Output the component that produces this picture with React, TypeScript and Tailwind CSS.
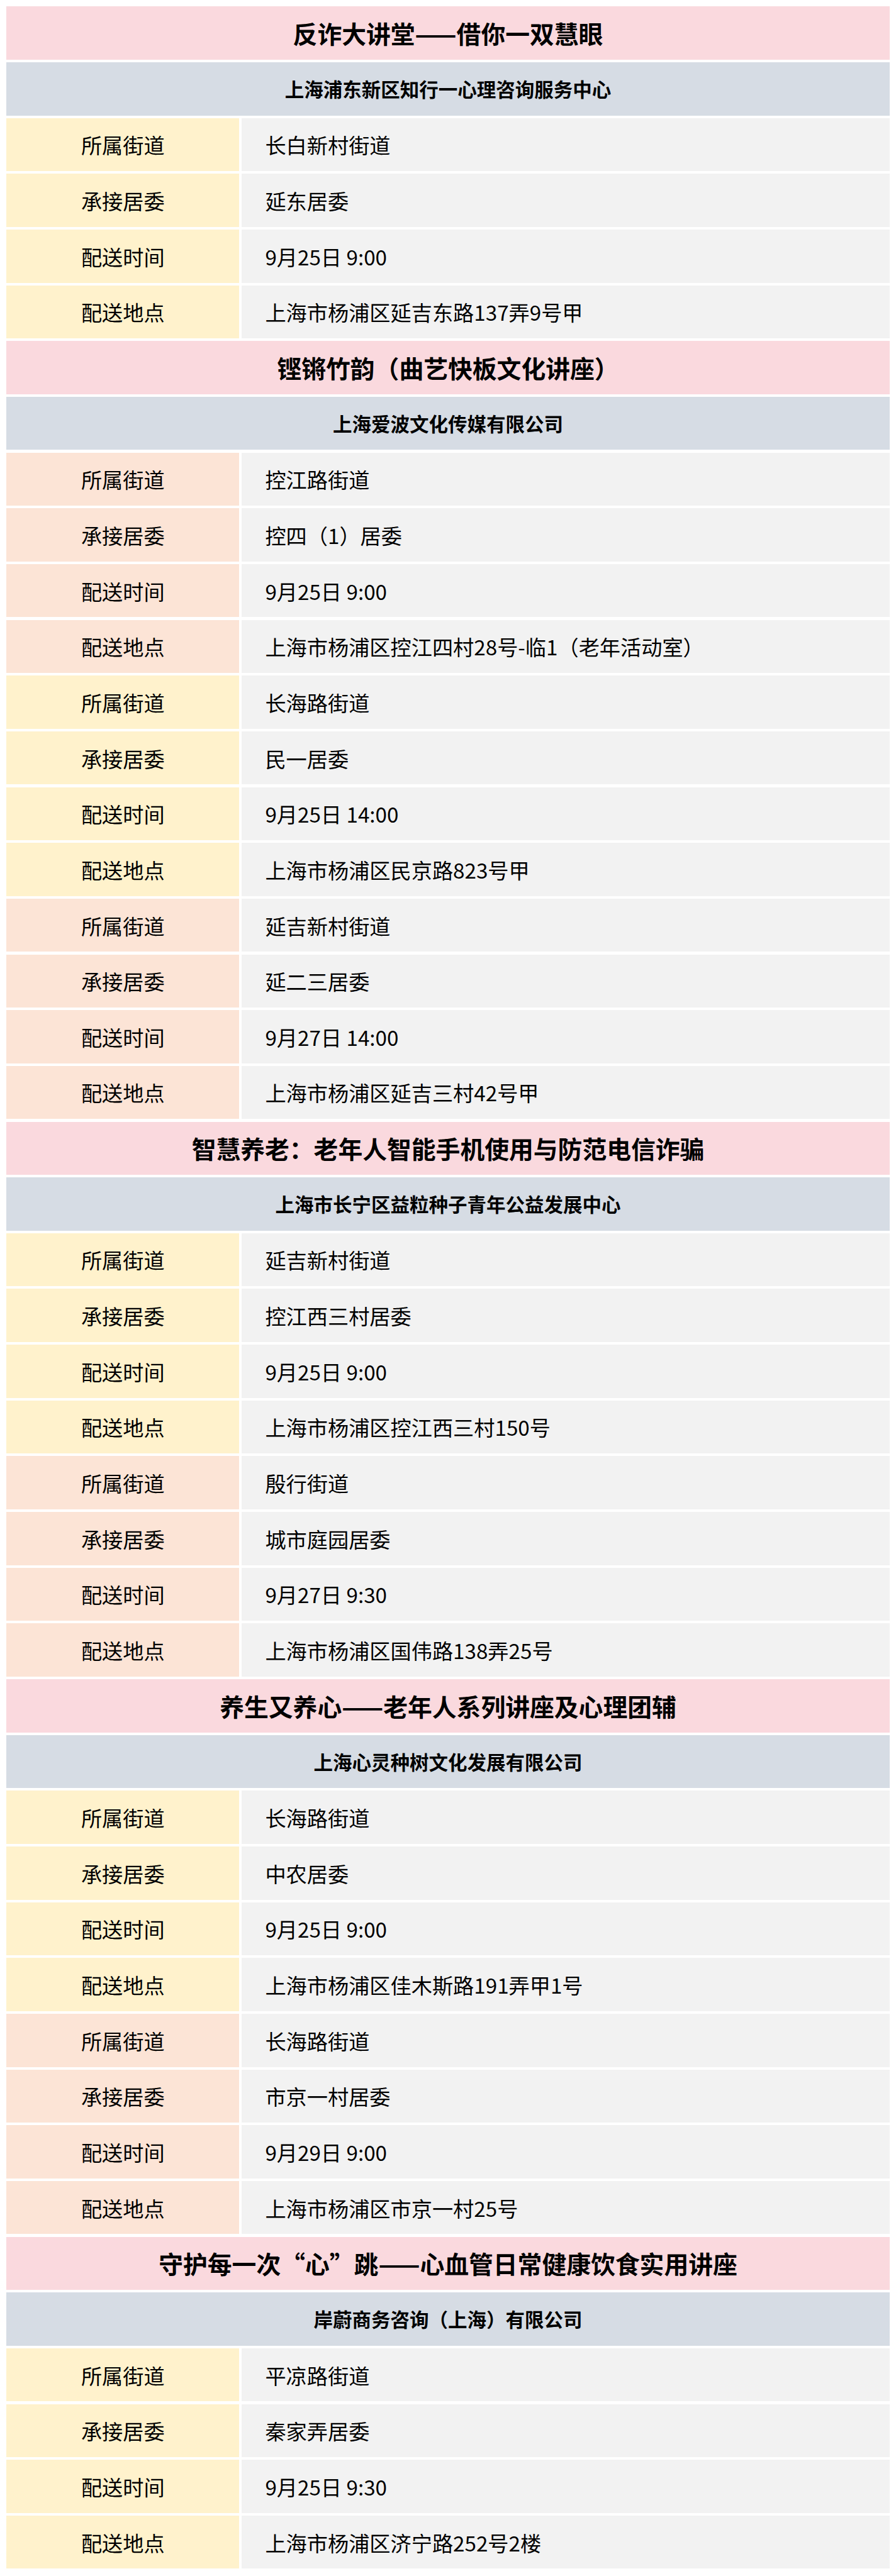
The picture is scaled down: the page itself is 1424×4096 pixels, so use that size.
import React from "react";

type Group = { street: string; committee: string; time: string; place: string };
type Section = { title: string; company: string; groups: Group[]; colors: ("y" | "p")[] };

const sections: Section[] = [
  {
    title: "反诈大讲堂——借你一双慧眼",
    company: "上海浦东新区知行一心理咨询服务中心",
    colors: ["y"],
    groups: [
      { street: "长白新村街道", committee: "延东居委", time: "9月25日 9:00", place: "上海市杨浦区延吉东路137弄9号甲" },
    ],
  },
  {
    title: "铿锵竹韵（曲艺快板文化讲座）",
    company: "上海爱波文化传媒有限公司",
    colors: ["p", "y", "p"],
    groups: [
      { street: "控江路街道", committee: "控四（1）居委", time: "9月25日 9:00", place: "上海市杨浦区控江四村28号-临1（老年活动室）" },
      { street: "长海路街道", committee: "民一居委", time: "9月25日 14:00", place: "上海市杨浦区民京路823号甲" },
      { street: "延吉新村街道", committee: "延二三居委", time: "9月27日 14:00", place: "上海市杨浦区延吉三村42号甲" },
    ],
  },
  {
    title: "智慧养老：老年人智能手机使用与防范电信诈骗",
    company: "上海市长宁区益粒种子青年公益发展中心",
    colors: ["y", "p"],
    groups: [
      { street: "延吉新村街道", committee: "控江西三村居委", time: "9月25日 9:00", place: "上海市杨浦区控江西三村150号" },
      { street: "殷行街道", committee: "城市庭园居委", time: "9月27日 9:30", place: "上海市杨浦区国伟路138弄25号" },
    ],
  },
  {
    title: "养生又养心——老年人系列讲座及心理团辅",
    company: "上海心灵种树文化发展有限公司",
    colors: ["y", "p"],
    groups: [
      { street: "长海路街道", committee: "中农居委", time: "9月25日 9:00", place: "上海市杨浦区佳木斯路191弄甲1号" },
      { street: "长海路街道", committee: "市京一村居委", time: "9月29日 9:00", place: "上海市杨浦区市京一村25号" },
    ],
  },
  {
    title: "守护每一次“心”跳——心血管日常健康饮食实用讲座",
    company: "岸蔚商务咨询（上海）有限公司",
    colors: ["y"],
    groups: [
      { street: "平凉路街道", committee: "秦家弄居委", time: "9月25日 9:30", place: "上海市杨浦区济宁路252号2楼" },
    ],
  },
];

function Row({ label, value, color }: { label: string; value: string; color: "y" | "p" }) {
  return (
    <div className="flex h-[84.5px] gap-[4.16px]">
      <div
        className={
          "flex w-[369.9px] shrink-0 items-center justify-center text-[33.2px] leading-none text-black " +
          (color === "y" ? "bg-[#fff2cc]" : "bg-[#fce4d6]")
        }
      >
        {label}
      </div>
      <div className="flex flex-1 items-center bg-[#f2f2f2] pl-[37px] text-[33.2px] leading-none text-black">
        {value}
      </div>
    </div>
  );
}

export default function App() {
  return (
    <div className="bg-white p-[10.39px] font-['Noto_Sans_CJK_SC','Microsoft_YaHei',sans-serif]">
      <div className="flex flex-col gap-[4.16px]">
        {sections.map((s, si) => (
          <React.Fragment key={si}>
            <div className="flex h-[84.5px] items-center justify-center bg-[#fad9de] text-[38.8px] font-bold leading-none text-black">
              {s.title}
            </div>
            <div className="flex h-[84.5px] items-center justify-center bg-[#d6dce4] text-[30.5px] font-bold leading-none text-black">
              {s.company}
            </div>
            {s.groups.map((g, gi) => (
              <React.Fragment key={gi}>
                <Row label="所属街道" value={g.street} color={s.colors[gi]} />
                <Row label="承接居委" value={g.committee} color={s.colors[gi]} />
                <Row label="配送时间" value={g.time} color={s.colors[gi]} />
                <Row label="配送地点" value={g.place} color={s.colors[gi]} />
              </React.Fragment>
            ))}
          </React.Fragment>
        ))}
      </div>
    </div>
  );
}
